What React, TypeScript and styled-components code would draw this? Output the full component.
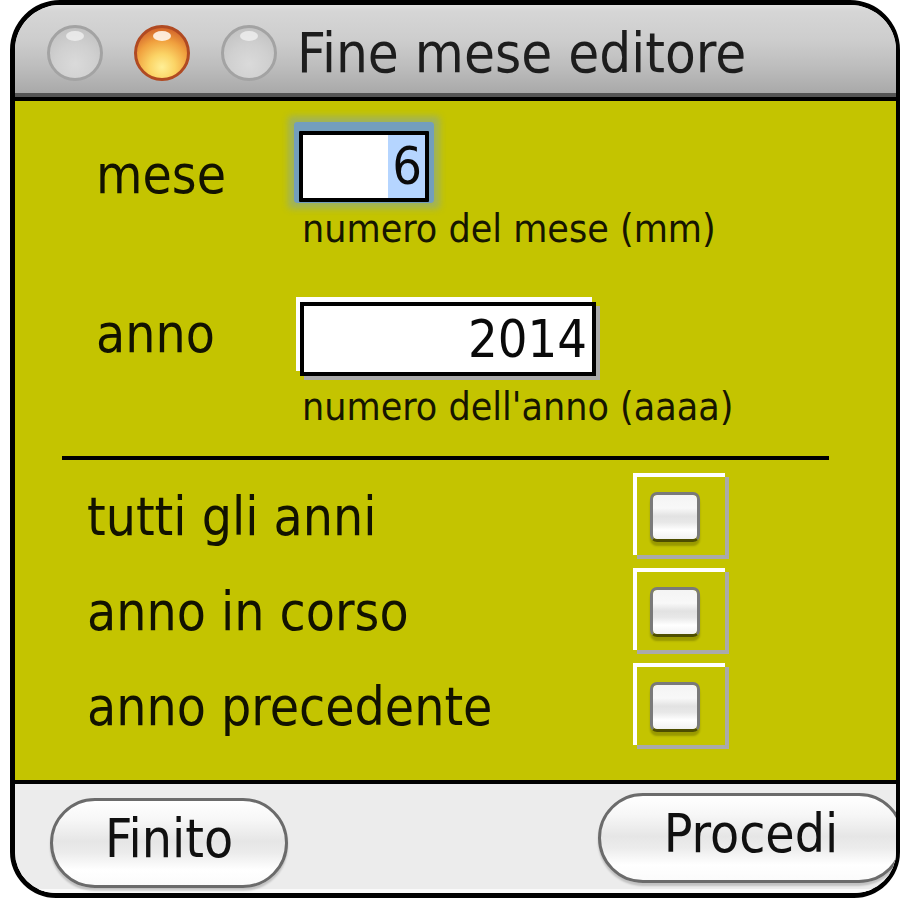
import React from 'react';
import styled, { createGlobalStyle } from 'styled-components';

const GlobalStyle = createGlobalStyle`
  html, body {
    margin: 0;
    padding: 0;
    background: #ffffff;
  }
  body {
    font-family: "DejaVu Sans Condensed", "DejaVu Sans", "Liberation Sans", sans-serif;
    font-stretch: condensed;
    color: #111;
  }
`;

const TRAFFIC = ['gray', 'orange', 'gray'] as const;

const CHECKS = ['tutti gli anni', 'anno in corso', 'anno precedente'];

function App() {
  return (
    <>
      <GlobalStyle />
      <Window>
        <TitleBar>
          {TRAFFIC.map((kind, i) => (
            <Light key={i} $kind={kind} />
          ))}
          <Title>Fine mese editore</Title>
        </TitleBar>

        <Body>
          <FieldGrid>
            <Label $top={17}>mese</Label>
            <MonthField>
              <Selected>6</Selected>
            </MonthField>
            <span />
            <Hint $top={7} $bottom={54}>
              numero del mese (mm)
            </Hint>

            <Label $top={5}>anno</Label>
            <YearField>2014</YearField>
            <span />
            <Hint $top={11} $bottom={0}>
              numero dell'anno (aaaa)
            </Hint>
          </FieldGrid>

          <Separator />

          <CheckList>
            {CHECKS.map((text) => (
              <CheckRow key={text}>
                <CheckLabel>{text}</CheckLabel>
                <CheckFrame>
                  <CheckBox />
                </CheckFrame>
              </CheckRow>
            ))}
          </CheckList>
        </Body>

        <Footer>
          <PillButton $width={238} $top={14}>
            Finito
          </PillButton>
          <PillButton $width={306} $top={9} $overhang={8}>
            Procedi
          </PillButton>
        </Footer>
      </Window>
    </>
  );
}

const Window = styled.div`
  box-sizing: border-box;
  margin-left: 10px;
  width: 890px;
  height: 898px;
  border-style: solid;
  border-color: #000;
  border-width: 5px 4px 5px 5px;
  border-radius: 50px 50px 46px 46px;
  overflow: hidden;
  display: flex;
  flex-direction: column;
  background: #ececec;
`;

const TitleBar = styled.div`
  box-sizing: border-box;
  height: 92px;
  padding: 8px 0 0 32px;
  border-bottom: 4px solid #555;
  display: flex;
  align-items: center;
  background: linear-gradient(
    #e2e2e2 0px,
    #d6d6d6 6px,
    #cdcdcd 40%,
    #bdbdbd 70%,
    #a9a9a9 100%
  );
`;

const Light = styled.div<{ $kind: 'gray' | 'orange' }>`
  position: relative;
  box-sizing: border-box;
  width: 56px;
  height: 56px;
  margin-right: 31px;
  border-radius: 50%;
  border: 3px solid ${(p) => (p.$kind === 'orange' ? '#b04a22' : '#a3a3a3')};
  background: ${(p) =>
    p.$kind === 'orange'
      ? 'radial-gradient(circle at 50% 78%, #ffef96 0%, #fbd466 28%, #f0a03e 58%, #d2642a 85%, #b8502a 100%)'
      : 'radial-gradient(circle at 50% 72%, #dadada 0%, #d0d0d0 45%, #c4c4c4 80%, #b4b4b4 100%)'};

  &::after {
    content: '';
    position: absolute;
    left: 50%;
    top: 3px;
    width: 18px;
    height: 10px;
    margin-left: -9px;
    border-radius: 50%;
    background: ${(p) =>
      p.$kind === 'orange' ? 'rgba(255, 245, 235, 0.9)' : 'rgba(240, 240, 240, 0.8)'};
  }

  &:nth-of-type(3) {
    margin-right: 20px;
  }
`;

const Title = styled.div`
  font-size: 56px;
  line-height: 56px;
  color: #1d1d1d;
  white-space: nowrap;
`;

const Body = styled.div`
  box-sizing: border-box;
  height: 687px;
  padding-top: 30px;
  border-top: 4px solid #000;
  border-bottom: 4px solid #000;
  background: #c4c400;
`;

const FieldGrid = styled.div`
  display: grid;
  grid-template-columns: 203px auto;
  justify-content: start;
  align-items: start;
  padding-left: 81px;
`;

const Label = styled.div<{ $top: number }>`
  margin-top: ${(p) => p.$top}px;
  font-size: 53px;
  line-height: 53px;
  color: #121200;
`;

const Hint = styled.div<{ $top: number; $bottom: number }>`
  margin: ${(p) => p.$top}px 0 ${(p) => p.$bottom}px 3px;
  font-size: 39px;
  line-height: 39px;
  color: #161600;
  white-space: nowrap;
`;

const TextField = styled.div`
  box-sizing: border-box;
  border: 4px solid #000;
  background: #fff;
  display: flex;
  justify-content: flex-end;
  font-size: 52px;
  color: #0a0a0a;
`;

const MonthField = styled(TextField)`
  width: 130px;
  height: 71px;
  border-radius: 1px;
  box-shadow: 0 -4px 0 5px rgba(104, 152, 214, 0.8),
    0 -4px 6px 11px rgba(104, 152, 230, 0.38);
`;

const Selected = styled.span`
  padding: 0 3px 0 4px;
  line-height: 63px;
  background: #b5d5ff;
`;

const YearField = styled(TextField)`
  width: 296px;
  height: 74px;
  margin-left: 1px;
  padding-right: 5px;
  line-height: 66px;
  box-shadow: -4px -5px 0 #fff, 4px 4px 0 #aaa;
`;

const Separator = styled.div`
  width: 767px;
  height: 4px;
  margin: 30px 0 0 47px;
  background: #000;
`;

const CheckList = styled.div`
  display: flex;
  flex-direction: column;
  gap: 13px;
  margin-top: 13px;
`;

const CheckRow = styled.div`
  display: grid;
  grid-template-columns: 546px 92px;
  height: 82px;
  padding-left: 72px;
`;

const CheckLabel = styled.div`
  align-self: center;
  padding-top: 5px;
  font-size: 53px;
  line-height: 53px;
  color: #121200;
  white-space: nowrap;
`;

const CheckFrame = styled.div`
  box-sizing: border-box;
  width: 92px;
  height: 82px;
  padding: 15px 0 0 13px;
  border-top: 4px solid #fff;
  border-left: 4px solid #fff;
  box-shadow: 4px 4px 0 #aaa;
`;

const CheckBox = styled.div`
  box-sizing: border-box;
  width: 50px;
  height: 50px;
  border: 3px solid #7a7a7a;
  border-bottom-color: rgba(0, 0, 0, 0.6);
  border-radius: 7px;
  background-clip: padding-box;
  background-image: linear-gradient(
    #f4f4f4 0%,
    #f8f8f8 30%,
    #e2e2e2 48%,
    #e8e8e8 62%,
    #ffffff 80%,
    #f2f2f2 100%
  );
  box-shadow: 0 4px 2px rgba(0, 0, 0, 0.22);
`;

const Footer = styled.div`
  flex: 1;
  display: flex;
  justify-content: space-between;
  align-items: flex-start;
  padding-left: 35px;
  background: #ececec;
  box-shadow: inset 0 -4px 0 #fafafa;
`;

const PillButton = styled.div<{ $width: number; $top: number; $overhang?: number }>`
  box-sizing: border-box;
  flex: none;
  width: ${(p) => p.$width}px;
  height: 90px;
  margin-top: ${(p) => p.$top}px;
  margin-right: ${(p) => -(p.$overhang ?? 0)}px;
  padding-bottom: 10px;
  border: 3px solid #6b6b6b;
  border-radius: 45px;
  background: linear-gradient(
    #ffffff 0%,
    #f7f7f7 22%,
    #e6e6e6 48%,
    #ececec 62%,
    #ffffff 82%,
    #fbfbfb 100%
  );
  box-shadow: 0 3px 2px rgba(0, 0, 0, 0.18);
  display: flex;
  align-items: center;
  justify-content: center;
  font-size: 53px;
  color: #101010;
  white-space: nowrap;
`;

export default App;
